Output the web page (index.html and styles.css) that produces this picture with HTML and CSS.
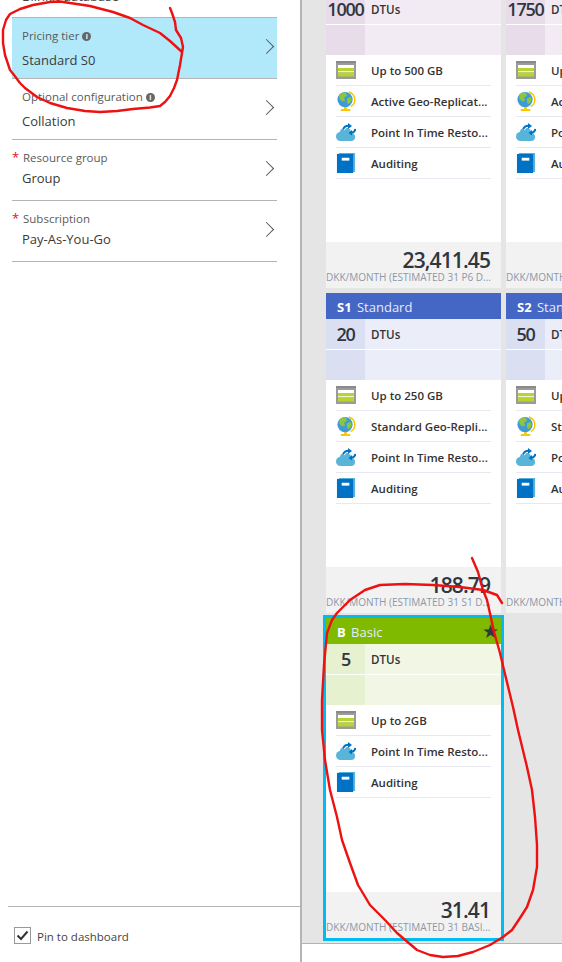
FILE: index.html
```html
<!DOCTYPE html>
<html lang="en">
<head>
    <meta charset="UTF-8">
    <meta name="viewport" content="width=device-width, initial-scale=1.0">
    <title>Pricing tier</title>
    <link rel="stylesheet" href="styles.css">
</head>
<body>

    <svg class="defs" width="0" height="0">
        <symbol id="iconStorage" viewBox="0 0 20 18">
            <rect width="20" height="18" fill="#9b9b9b"/>
            <rect y="0" width="20" height="2" fill="#8a8a8a"/>
            <rect x="2" y="4" width="16" height="3" fill="#fff"/>
            <rect x="2" y="7" width="16" height="3" fill="#b8d432"/>
            <rect x="2" y="10" width="16" height="1.500" fill="#eef3d2"/>
            <rect x="2" y="11.500" width="16" height="4" fill="#b8d432"/>
        </symbol>
        <symbol id="iconGlobe" viewBox="0 0 20 21">
            <path d="M13 1a8.500 8.500 0 0 1 2 15.500" fill="none" stroke="#f7c600" stroke-width="1.500"/>
            <rect x="8" y="17" width="3" height="2" fill="#f7c600"/>
            <rect x="4.500" y="19" width="10" height="2" fill="#f7c600"/>
            <circle cx="9" cy="9" r="8" fill="#3f9bd8"/>
            <path d="M3 4c2-2 5-3 7-2l1 3-3 2 1 3-3 1-3-3zM11 8l4-2 1 4-3 4-2-2z" fill="#8cc63f"/>
        </symbol>
        <symbol id="iconCloud" viewBox="0 0 20 18">
            <circle cx="4.500" cy="13.500" r="4.500" fill="#59b4d9"/>
            <circle cx="9.500" cy="10.500" r="6" fill="#59b4d9"/>
            <circle cx="15" cy="14" r="4" fill="#59b4d9"/>
            <rect x="4.500" y="13" width="10.500" height="5" fill="#59b4d9"/>
            <path d="M7 6.500C8 4 10 2.800 12.500 2.800" fill="none" stroke="#fff" stroke-width="3.500"/>
            <path d="M7 6.500C8 4 10 2.800 12.500 2.800" fill="none" stroke="#0072c6" stroke-width="2"/>
            <path d="M12 0l4 3-4 3z" fill="#0072c6"/>
            <path d="M19.500 6c-.4 2-2 3.500-4 3.800" fill="none" stroke="#0072c6" stroke-width="2"/>
            <path d="M16 7l-3.500 3 3.500 2.500z" fill="#0072c6"/>
        </symbol>
        <symbol id="iconBook" viewBox="0 0 19 21">
            <rect x="2" y="0" width="17" height="20" fill="#59b4d9"/>
            <rect x="0" y="1" width="17" height="20" fill="#0072c6"/>
            <rect x="5" y="5" width="8" height="3" fill="#fff"/>
        </symbol>
    </svg>

    <aside class="settings">
        <div class="settings-list">
            <div class="clipped-row">Blinkit database</div>

            <a class="setting selected">
                <div class="setting-text">
                    <div class="setting-label">Pricing tier <span class="info">i</span></div>
                    <div class="setting-value">Standard S0</div>
                </div>
                <span class="chevron"></span>
            </a>
            <a class="setting">
                <div class="setting-text">
                    <div class="setting-label">Optional configuration <span class="info">i</span></div>
                    <div class="setting-value">Collation</div>
                </div>
                <span class="chevron"></span>
            </a>
            <a class="setting required">
                <div class="setting-text">
                    <div class="setting-label">Resource group</div>
                    <div class="setting-value">Group</div>
                </div>
                <span class="chevron"></span>
            </a>
            <a class="setting required">
                <div class="setting-text">
                    <div class="setting-label">Subscription</div>
                    <div class="setting-value">Pay-As-You-Go</div>
                </div>
                <span class="chevron"></span>
            </a>
        </div>

        <label class="pin">
            <span class="pin-box">
                <svg width="13" height="11" viewBox="0 0 13 11"><path d="M1.500 5.500l3.500 3.500 6.500-7.500" fill="none" stroke="#333" stroke-width="2"/></svg>
            </span>
            <span class="pin-text">Pin to dashboard</span>
        </label>
    </aside>

    <main class="tiers">
        <div class="tier-grid">

            <section class="tier premium">
                <div class="tier-head"></div>
                <div class="tier-row"><span class="tier-num">1000</span><span class="tier-unit">DTUs</span></div>
                <div class="tier-row tier-row-empty"><span class="tier-num"></span></div>
                <ul class="features">
                    <li><svg class="ficon"><use href="#iconStorage"/></svg>Up to 500 GB</li>
                    <li><svg class="ficon"><use href="#iconGlobe"/></svg>Active Geo-Replicat...</li>
                    <li><svg class="ficon"><use href="#iconCloud"/></svg>Point In Time Resto...</li>
                    <li><svg class="ficon"><use href="#iconBook"/></svg>Auditing</li>
                </ul>
                <div class="price">
                    <div class="price-value">23,411.45</div>
                    <div class="price-note">DKK/MONTH (ESTIMATED 31 P6 D...</div>
                </div>
            </section>

            <section class="tier premium">
                <div class="tier-head"></div>
                <div class="tier-row"><span class="tier-num">1750</span><span class="tier-unit">DTUs</span></div>
                <div class="tier-row tier-row-empty"><span class="tier-num"></span></div>
                <ul class="features">
                    <li><svg class="ficon"><use href="#iconStorage"/></svg>Up</li>
                    <li><svg class="ficon"><use href="#iconGlobe"/></svg>Active Geo-Replicat...</li>
                    <li><svg class="ficon"><use href="#iconCloud"/></svg>Point In Time Resto...</li>
                    <li><svg class="ficon"><use href="#iconBook"/></svg>Auditing</li>
                </ul>
                <div class="price">
                    <div class="price-value"></div>
                    <div class="price-note">DKK/MONTH</div>
                </div>
            </section>

            <section class="tier standard">
                <div class="tier-head"><b>S1</b> Standard</div>
                <div class="tier-row"><span class="tier-num">20</span><span class="tier-unit">DTUs</span></div>
                <div class="tier-row tier-row-empty"><span class="tier-num"></span></div>
                <ul class="features">
                    <li><svg class="ficon"><use href="#iconStorage"/></svg>Up to 250 GB</li>
                    <li><svg class="ficon"><use href="#iconGlobe"/></svg>Standard Geo-Repli...</li>
                    <li><svg class="ficon"><use href="#iconCloud"/></svg>Point In Time Resto...</li>
                    <li><svg class="ficon"><use href="#iconBook"/></svg>Auditing</li>
                </ul>
                <div class="price">
                    <div class="price-value">188.79</div>
                    <div class="price-note">DKK/MONTH (ESTIMATED 31 S1 D...</div>
                </div>
            </section>

            <section class="tier standard">
                <div class="tier-head"><b>S2</b> Standard</div>
                <div class="tier-row"><span class="tier-num">50</span><span class="tier-unit">DTUs</span></div>
                <div class="tier-row tier-row-empty"><span class="tier-num"></span></div>
                <ul class="features">
                    <li><svg class="ficon"><use href="#iconStorage"/></svg>Up</li>
                    <li><svg class="ficon"><use href="#iconGlobe"/></svg>Standard Geo-Repli...</li>
                    <li><svg class="ficon"><use href="#iconCloud"/></svg>Point In Time Resto...</li>
                    <li><svg class="ficon"><use href="#iconBook"/></svg>Auditing</li>
                </ul>
                <div class="price">
                    <div class="price-value"></div>
                    <div class="price-note">DKK/MONTH</div>
                </div>
            </section>

            <section class="tier basic picked">
                <div class="tier-head"><b>B</b> Basic <span class="star">★</span></div>
                <div class="tier-row"><span class="tier-num">5</span><span class="tier-unit">DTUs</span></div>
                <div class="tier-row tier-row-empty"><span class="tier-num"></span></div>
                <ul class="features">
                    <li><svg class="ficon"><use href="#iconStorage"/></svg>Up to 2GB</li>
                    <li><svg class="ficon"><use href="#iconCloud"/></svg>Point In Time Resto...</li>
                    <li><svg class="ficon"><use href="#iconBook"/></svg>Auditing</li>
                </ul>
                <div class="price">
                    <div class="price-value">31.41</div>
                    <div class="price-note">DKK/MONTH (ESTIMATED 31 BASI...</div>
                </div>
            </section>

        </div>
    </main>

    <!-- red pen marks someone drew on the screenshot -->
    <svg class="scribble" width="562" height="962" viewBox="0 0 562 962">
        <polyline points="170,8 172,13 175,22 176,30 181,38 183,47 182,53 180,65 177,80 174,88 170,96 165,102 160,106 150,107.500 133,109 117,111 100,112 85,111 67,108 50,103 37,97 25,88 20,83 14,75 10,70 5,55 3,43 3,30 6,20 10,14 20,9 33,5 50,2 60,1.500 90,6 113,12 130,18 143,25 160,33 170,41 182,52"/>
        <polyline points="472,558 478,572 483,590 487,600 491,618 494,632 500,653 504,670 513,707 518,730 527,767 532,790 535,817 537,845 537,867 533,890 527,907 520,918 512,930 503,937 490,945 473,952 458,956 443,957 430,955 417,950 397,933 385,920 370,905 358,885 350,863 342,840 337,817 330,790 325,760 322,730 322,700 324,665 327,633 332,620 337,613 350,600 365,590 380,585 405,584 433,585 460,587 483,590 497,595 502,603"/>
    </svg>

</body>
</html>
```

FILE: styles.css
```css
body {
    font-family: "Open Sans", "Noto Sans", sans-serif;
    margin: 0;
    padding: 0;
    height: 962px;
    overflow: hidden;
    display: flex;
    background-color: #fff;
    color: #333;
}
.defs {
    position: absolute;
}

/* left blade */
.settings {
    width: 300px;
    border-right: 2px solid #b4b4b4;
    display: flex;
    flex-direction: column;
    justify-content: space-between;
    overflow: hidden;
}
.settings-list {
    padding: 0 23px 0 12px;
}
.clipped-row {
    height: 30px;
    padding-left: 10px;
    margin-top: -13px;
    line-height: 18px;
    font-size: 13px;
    border-bottom: 1px solid #b4b4b4;
    color: #444;
}
.setting {
    display: flex;
    align-items: flex-start;
    justify-content: space-between;
    height: 60px;
    padding-left: 10px;
    border-bottom: 1px solid #b4b4b4;
}
.setting.selected {
    background-color: #b1e9fa;
}
.setting-label {
    font-size: 11.500px;
    line-height: 16px;
    margin-top: 10px;
    color: #5a5a5a;
}
.setting-value {
    font-size: 13px;
    line-height: 18px;
    margin-top: 7px;
    color: #3a3a3a;
}
.required .setting-label {
    position: relative;
    padding-left: 1px;
}
.required .setting-label::before {
    content: "*";
    position: absolute;
    left: -10px;
    top: -1px;
    color: #e81123;
    font-size: 13px;
}
.required .setting-value {
    margin-top: 3px;
}
.info {
    display: inline-block;
    width: 9px;
    height: 9px;
    border-radius: 50%;
    background-color: #666;
    color: #fff;
    font-size: 7px;
    line-height: 9px;
    text-align: center;
    font-weight: 700;
    vertical-align: 1px;
}
.chevron {
    width: 10px;
    height: 10px;
    margin: 23px 5px 0 0;
    border-top: 1px solid #555;
    border-right: 1px solid #555;
    transform: rotate(45deg) scale(.98);
}
.pin {
    display: flex;
    align-items: flex-start;
    gap: 6px;
    height: 56px;
    margin-left: 8px;
    padding: 20px 0 0 6px;
    border-top: 1px solid #b4b4b4;
    box-sizing: border-box;
    font-size: 11.500px;
    color: #444;
}
.pin-box {
    width: 15px;
    height: 15px;
    border: 1px solid #999;
    display: flex;
    align-items: center;
    justify-content: center;
}
.pin-text {
    margin-top: 1px;
    line-height: 18px;
}

/* right side */
.tiers {
    flex: 1;
    height: 943px;
    background-color: #e5e5e5;
    border-bottom: 1px solid #b4b4b4;
    overflow: hidden;
}
.tier-grid {
    display: grid;
    grid-template-columns: 175px 175px;
    grid-auto-rows: 320px;
    gap: 5px;
    margin: -32px 0 0 24px;
}
.tier {
    display: flex;
    flex-direction: column;
    background-color: #fff;
    min-width: 0;
}
.tier.picked {
    outline: 3px solid #00bcf2;
}
.tier-head {
    position: relative;
    height: 26px;
    padding-left: 11px;
    font-size: 13px;
    line-height: 28px;
    color: #e6ebf8;
    white-space: nowrap;
    overflow: hidden;
}
.tier-head b {
    color: #fff;
    margin-right: 2px;
}
.star {
    position: absolute;
    right: 2px;
    top: -1px;
    font-size: 19px;
    color: #2d3a3f;
    font-family: "DejaVu Sans", sans-serif;
}
.tier-row {
    display: flex;
    height: 30px;
    flex-shrink: 0;
}
.tier-row-empty {
    margin-top: 1px;
}
.tier-num {
    width: 39px;
    height: 100%;
    line-height: 31px;
    text-align: center;
    font-size: 18px;
    font-weight: 600;
    letter-spacing: -1.200px;
    color: #2f3640;
}
.tier-unit {
    margin-left: 6px;
    font-size: 11.600px;
    font-weight: 600;
    line-height: 32px;
    color: #333;
}
.premium .tier-head { background-color: #68217a; }
.premium .tier-row { background-color: #f3ebf4; }
.premium .tier-num { background-color: #e8dcea; }
.standard .tier-head { background-color: #4466c4; }
.standard .tier-row { background-color: #ebeef9; }
.standard .tier-num { background-color: #dae0f2; }
.basic .tier-head { background-color: #7fba00; }
.basic .tier-row { background-color: #f2f7e5; }
.basic .tier-num { background-color: #e5f1cf; }

.features {
    flex: 1;
    list-style: none;
    margin: 0 10px;
    padding: 0;
}
.features li {
    display: flex;
    align-items: center;
    height: 30px;
    border-bottom: 1px solid #e8e8f0;
    font-size: 11.500px;
    font-weight: 600;
    color: #333;
    white-space: nowrap;
}
.ficon {
    width: 20px;
    height: 20px;
    margin-right: 15px;
    flex-shrink: 0;
}
.price {
    height: 46px;
    background-color: #f2f2f2;
}
.price-value {
    height: 20px;
    padding: 8px 11px 0 0;
    text-align: right;
    font-size: 21px;
    font-weight: 600;
    letter-spacing: -.9px;
    line-height: 20px;
    color: #2f3640;
}
.price-note {
    font-size: 10px;
    line-height: 14px;
    color: #8a98a8;
    white-space: nowrap;
    overflow: hidden;
}
.scribble {
    position: absolute;
    left: 0;
    top: 0;
    pointer-events: none;
}
.scribble polyline {
    fill: none;
    stroke: #ee1111;
    stroke-width: 2.400;
    stroke-linejoin: round;
    stroke-linecap: round;
}
```
